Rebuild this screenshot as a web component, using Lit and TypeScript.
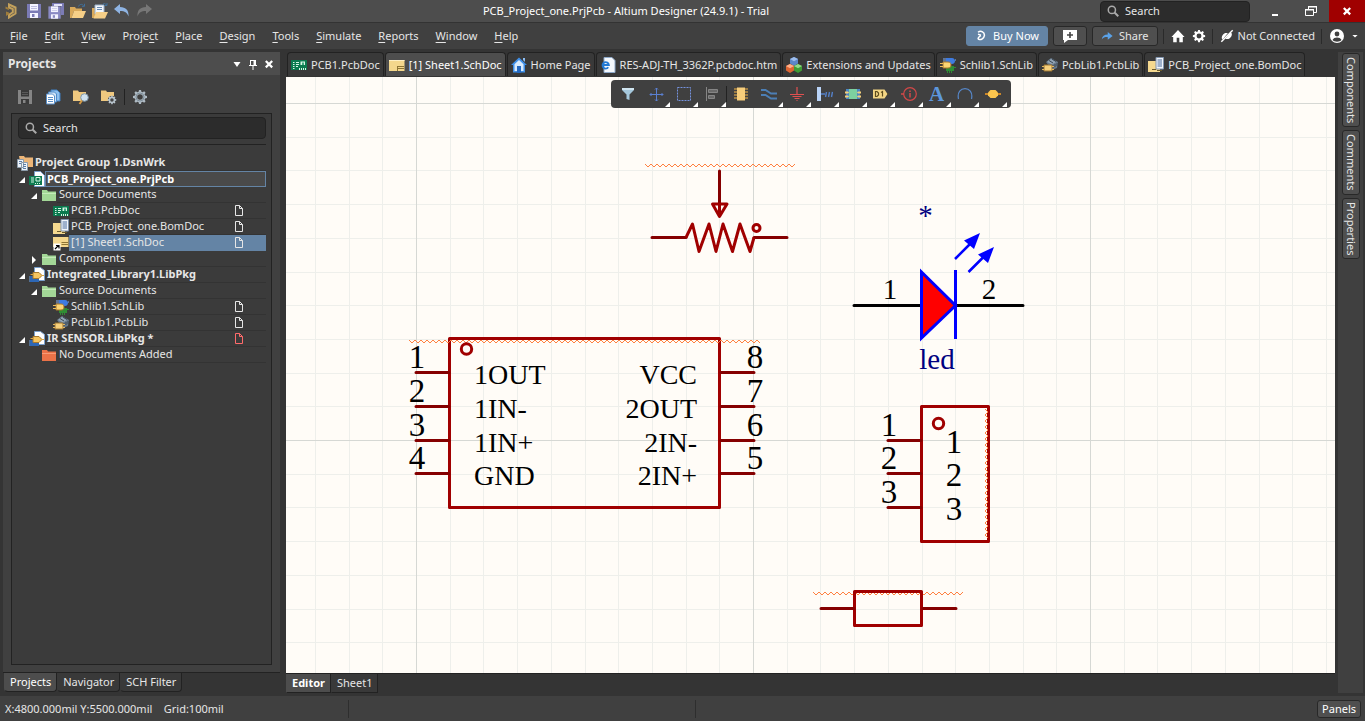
import { LitElement, html, css, svg, TemplateResult } from "lit";
import { customElement, property, state } from "lit/decorators.js";
import { classMap } from "lit/directives/class-map.js";

const gearPath =
  "M7 1h2l.4 1.8 1.2.5 1.6-1 1.4 1.4-1 1.6.5 1.2L15 7v2l-1.9.5-.5 1.2 1 1.6-1.4 1.4-1.6-1-1.2.5L9 15H7l-.4-1.8-1.2-.5-1.6 1-1.4-1.4 1-1.6-.5-1.2L1 9V7l1.9-.5.5-1.2-1-1.6 1.4-1.4 1.6 1 1.2-.5zM8 5.2a2.8 2.8 0 1 0 0 5.6 2.8 2.8 0 0 0 0-5.6z";

const floppy = (edge: string, paper: string) => svg`
  <path d="M1 1h14v14H1z" fill=${edge}/><path d="M4 1h8v6.500H4z" fill=${paper}/>
  <path d="M5 3h6v1H5zM5 5h6v1H5z" fill=${edge} opacity=".45"/>
  <path d="M4 10h8v5H4z" fill=${paper}/><path d="M6 11h2.500v3H6z" fill=${edge}/>`;

const icons: Record<string, TemplateResult<2>> = {
  logo: svg`<path d="M5 1.500 11.500 4.500v6L5 14.500v-2.800l3.800-2.400V6.200L5 4.500z" fill="none" stroke="#c3a15c" stroke-width="2"/><path d="M1.500 3.500 5 5v2L1.500 5.800zM2 8.500l3 1v1.800L2 13z" fill="#9f7d3c"/>`,
  altium: svg`<path d="M4 3c4-3 9 0 8.500 4.500C12 11 8 13.500 5 12.500c-2-1 0-3.500 3-5M4 5.500l4 1.500" fill="none" stroke="#fff" stroke-width="2"/>`,
  save: floppy("#7b7bb5", "#f4f4ff"),
  saveGray: floppy("#858585", "#3a3a3a"),
  saveAll: svg`<path d="M4 0h12v12h-3V3H4z" fill="#7b7bb5"/><path d="M6 1h8v2H6z" fill="#e4e4fa"/><g transform="translate(-.5 2.500) scale(.88)">${floppy("#8a8ac4", "#f4f4ff")}</g>`,
  open: svg`<path d="M0 4h5l1 1.500h6V8H4L1.500 15H0z" fill="#d9a95a"/><path d="M4 8h12l-3 7H1.500z" fill="#f6cf87"/><path d="M8.500 3.500C9.500 1 12 .8 13.500 2.500M14.500.8v2.500H12" fill="none" stroke="#41719c"/>`,
  openDoc: svg`<path d="M0 5h3v10H0z" fill="#d9a95a"/><path d="M3 2h9v9H3z" fill="#f2f6fb" stroke="#9db3cc"/><path d="M5 4.500h5M5 6.500h5" stroke="#6c8db5"/><path d="M4 9h12l-3 6.500H1.500z" fill="#f6cf87"/><path d="M10.500 1.500c1.500-1.500 3-1 4 .5M15 0v2.500h-2.500" fill="none" stroke="#41719c"/>`,
  undo: svg`<path d="M0 6 6 1v3C12 4 15 7.500 14.500 13.500 13 9.500 11 8 6 8v3z" fill="#8fb4e3"/>`,
  redo: svg`<path d="M16 6 10 1v3C4 4 1 7.500 1.500 13.500 3 9.500 5 8 10 8v3z" fill="#777"/>`,
  search: svg`<circle cx="6.500" cy="6.500" r="4.800" fill="none" stroke="#aaa" stroke-width="2"/><path d="m10 10 5 5" stroke="#aaa" stroke-width="2.600"/>`,
  min: svg`<path d="M5 11h6v2H5z" fill="#fff"/>`,
  restore: svg`<path d="M5.500 6V3.500h8v6H11M2.500 6.500h8v6h-8z" fill="none" stroke="#fff"/><path d="M5 3h9v1.500H5zM2 6h9v1.500H2z" fill="#fff"/>`,
  close: svg`<path d="m4.800 5 6.400 6.400m0-6.400-6.400 6.400" stroke="#fff" stroke-width="2.200"/>`,
  plusBubble: svg`<path d="M1 2h14v10H6l-4 3V12H1z" fill="#fff"/><path d="M8 4v6M5 7h6" stroke="#444" stroke-width="1.600"/>`,
  share: svg`<path d="M1 12.500C1.500 8 4.500 6 9 6V2.500L15.500 8 9 13v-3.500C5.500 9.300 3 10 1 12.500z" fill="#5aa2e8"/>`,
  home: svg`<path d="M8 1 15.500 9h-2V15H9.500V10h-3v5H2.500V9H.5z" fill="#fff"/>`,
  gearWhite: svg`<path d=${gearPath} fill="#fff" fill-rule="evenodd"/>`,
  gear: svg`<path d=${gearPath} fill="#aebac3" fill-rule="evenodd"/><circle cx="8" cy="8" r="4" fill="none" stroke="#7d8d99"/>`,
  plug: svg`<path d="M2 10.500c0-3 2-6 5-6h2L3 12zM13.500 5c.5 3-2 6.500-5.500 6.500H6L12 4z" fill="#fff"/><path d="M1.500 14.500 14.500 1.500" stroke="#fff" stroke-width="1.600"/>`,
  user: svg`<circle cx="8" cy="8" r="7" fill="#fff"/><circle cx="8" cy="6" r="2.400" fill="#404040"/><path d="M3.500 12c1.500-3.300 7.500-3.300 9 0-2 2.300-7 2.300-9 0z" fill="#404040"/>`,
  caret: svg`<path d="M4.500 6.500h7L8 10z" fill="#fff"/>`,
  caretBig: svg`<path d="M4.500 6h7L8 11z" fill="#fff"/>`,
  pin: svg`<path d="M5.500 4v5M4 9.500h8M8 10v4M5.500 4.500H10" stroke="#fff" fill="none"/><path d="M8.500 4H11v5.500H8.500z" fill="#fff"/>`,
  copyDocs: svg`<path d="M6 1h6l3 3v8H6z" fill="#8fc0ee" stroke="#3f7fc2"/><path d="M3.500 3h6l2 2v8h-8z" fill="#cfe3f7" stroke="#4d8ac9"/><path d="M1.500 5h6l2 2v8h-8z" fill="#fff" stroke="#5a8fc8"/><path d="M3 8.500h5M3 10.500h5M3 12.500h5" stroke="#5a8fc8"/>`,
  folderFind: svg`<path d="M0 1.500h5L6 3h7v9H0z" fill="#efc87f"/><circle cx="11.500" cy="8.500" r="3.800" fill="#cfe2f0" stroke="#7e98ab"/><path d="M9 11.500 6.500 15" stroke="#d49a45" stroke-width="2"/>`,
  folderGear: svg`<path d="M0 1.500h5L6 3h7v9H0z" fill="#efc87f"/><g transform="translate(6 6) scale(.62)"><circle cx="8" cy="8" r="6.500" fill="#444"/><path d=${gearPath} fill="#b7c3cc" fill-rule="evenodd"/></g>`,
  group: svg`<path d="M2 1h5l1 1.500h8V12H4z" fill="#edb678"/><path d="M.500 4.500h6v8h-6zM4.500 7.500h6v8h-6z" fill="#eef3fa" stroke="#8d9cab"/><path d="M2 6.500h3M2 8.500h2M6 9.500h3M6 11.500h3M6 13.500h3" stroke="#5b7ea8"/>`,
  pcbProject: svg`<path d="M5.500.5h6l4 4v11h-10z" fill="#fff" stroke="#7aa0cc"/><path d="M0 5h13v9H0z" fill="#0d7a50"/><path d="M2 7h3M2 9h3M2 11h3M6 12.500h1m1 0h1m1 0h1" stroke="#d5f5e3"/><path d="M7 6.500h4V10H7z" fill="none" stroke="#d5f5e3"/>`,
  pcb: svg`<path d="M0 3h16v10H0z" fill="#0b7a4f"/><path d="M2 5h1.500v1H2zm0 2h1.500v1H2zm0 2h1.500v1H2zm0 2h1.500v1H2zM5 5h3v1H5zm0 2h3v1H5zm0 2h2v1H5zM9.500 4.500H14V8H9.500zM8 11h1v2H8zm2 0h1v2h-1zm2 0h1v2h-1zm2 0h1v2h-1z" fill="#d6f5e5"/><path d="M11 5.500h2V8h-2z" fill="#3aa97c"/>`,
  bom: svg`<path d="M0 4h12v11H0z" fill="#f5d98f"/><path d="M8 .5h7.500V12H8z" fill="#f1f5fb" stroke="#8093ad"/><path d="M9.500 3H14M9.500 5H14M9.500 7H14M9.500 9H14" stroke="#4a6c9e"/><path d="M4 12.500h4M9 13.500h5" stroke="#6b5a2a"/>`,
  sheet: svg`<path d="M0 3h15.500v11H0z" fill="#f4d78c"/><path d="M0 3h15.500v1H0z" fill="#fff0c4"/><path d="M8.500 9.500H15M8.500 11.500H15M8.500 9v5" stroke="#8d7434"/>`,
  sheetLink: svg`<path d="M0 2h15.500v10H0z" fill="#f4d78c"/><path d="M8.500 7.500H15M8.500 9.500H15" stroke="#8d7434"/><path d="M.500 8.500h7v7h-7z" fill="#fff"/><path d="M2 14l3.500-3.500M3 10.500h3v3" stroke="#000" fill="none" stroke-width="1.200"/>`,
  folderGreen: svg`<path d="M1 3h5l1 1.500h8V14H1z" fill="#a3d797"/><path d="M1 6h14v1H1z" fill="#c4eab9"/>`,
  folderRed: svg`<path d="M1 3h5l1 1.500h8V14H1z" fill="#ea7248"/><path d="M1 6h14v1H1z" fill="#f79a75"/>`,
  libPkg: svg`<path d="M5.500.5h6l4 3v10h-10z" fill="#fff" stroke="#7aa0cc"/><path d="M1 9h9v6H1z" fill="#2d67b5"/><path d="M0 10h1m-1 2h1m-1 2h1" stroke="#6fa4e6"/><path d="M4 5.500h6l3 3-3 3H4z" fill="#f6c55f" stroke="#a8782a"/><path d="M1.500 7.500H4M13 8.500h2" stroke="#d9a441"/>`,
  schLib: svg`<path d="M6 1h6c2 0 3 1.500 3 3s-1 3-3 3H6z" fill="#3e7be0"/><path d="M3 2h3m-3 2h3m9-1h1" stroke="#86aef0"/><path d="M6 9h8v5H6z" fill="#2f8d34"/><path d="M7.500 14v2m2-2v2m2-2v2M14 10.500h2" stroke="#2f8d34"/><path d="M3 5h5c2 0 3 1 3 3s-1 3-3 3H3z" fill="#fbd574" stroke="#a8782a"/><path d="M0 6.500h3M0 9.500h3" stroke="#f0bd58"/>`,
  pcbLib: svg`<path d="m4 5 5-4 7 4-1 6-5 2z" fill="#68798a"/><path d="m5 5 4-3 5 3-4 2.500z" fill="#93a5b5"/><path d="M7 3.500 11 6m-1-4 4 2.500M11 8v3m2-4v3m2-4v3" stroke="#3a4854"/><path d="M2 8h8v6H2z" fill="#f6d07c" stroke="#9c7430"/><path d="M0 9.500h2m-2 3h2m8-3h2m-2 3h2" stroke="#e3b75e"/>`,
  house: svg`<path d="M8 .5 0 8h2v7.500h12V8h2z" fill="#3f8fe8"/><path d="M8 3 3.500 7.200V14h9V7.200z" fill="#d9ebfd"/><path d="M6 9h4v7H6z" fill="#2468c0"/><path d="M12 1h2v4l-2-2z" fill="#8dbdf2"/>`,
  htm: svg`<path d="M4 .5h8l3 3v12H4z" fill="#f4f8fd" stroke="#8ea9c9"/><path d="M8.300 10.300A3.200 3.200 0 1 1 8.900 8H3" fill="none" stroke="#2179d5" stroke-width="1.800"/>`,
  cubes: svg`<path d="m8 0 4 2v4.500L8 9 4 6.500V2z" fill="#5d86c9"/><path d="m8 0 4 2-4 2.200L4 2z" fill="#9dbdec"/><path d="m4 7 4 2v4.500L4 16l-4-2.500V9z" fill="#dd6532"/><path d="m4 7 4 2-4 2.200L0 9z" fill="#ffb08a"/><path d="m12 7 4 2v4.500L12 16l-4-2.500V9z" fill="#3f9c35"/><path d="m12 7 4 2-4 2.200L8 9z" fill="#95d98a"/>`,
  file: svg`<path d="M4.500 3.500h4l3 3v7h-7zM8.500 3.500v3h3" fill="none" stroke="currentColor"/>`,
  filter: svg`<path d="M2 2h12v2L9.500 8.500V14l-3-1V8.500L2 4z" fill="#a5c8dd"/><path d="M2 2h12v2H2z" fill="#d0e5f0"/>`,
  cross: svg`<path d="M8.500 2v13M2 8.500h13M7 3.500 8.500 2 10 3.500M7 13.500 8.500 15 10 13.500M3.500 7 2 8.500 3.500 10M13.500 7 15 8.500 13.500 10" fill="none" stroke="#5a7fd0"/>`,
  select: svg`<path d="M1.500 1.500h13v13h-13z" fill="none" stroke="#7592de" stroke-dasharray="2 1"/>`,
  align: svg`<path d="M2.500 1v14" stroke="#858585"/><path d="M4.500 3.500h9v3h-9zM4.500 9.500h6v3h-6z" fill="#6a6a6a" stroke="#858585"/>`,
  part: svg`<path d="M4 1.500h8v13H4z" fill="#f6cd7b"/><path d="M1 3h3M1 6h3M1 9h3M1 12h3m8-9h3m-3 3h3m-3 3h3m-3 3h3" stroke="#b98f44" stroke-width="1.500"/>`,
  wire: svg`<path d="M0 4h4.500L10 7.500h6M0 9h4.500L10 12.500h6" fill="none" stroke="#4c7fb5" stroke-width="1.800"/>`,
  ground: svg`<path d="M8 1v7M1 8.500h14M3.500 10.500h9M5.500 12.500h5M7.500 14.500h1" stroke="#e05050" stroke-width="1.200"/>`,
  harness: svg`<path d="M0 1h4v14H0z" fill="#b9d3f7"/><path d="M4 8h4M8.500 11l1-5M11.500 11l1-5M14.500 11l1-5" stroke="#5480c9" stroke-width="1.400"/>`,
  sheetSymbol: svg`<path d="M1 3h14v10H1z" fill="#4c86c5"/><path d="M4 3h8v10H4z" fill="#7dd0a0"/><path d="M0 5.500h3l1 1-1 1H0zm0 4h3l1 1-1 1H0zM16 5.500h-3l-1 1 1 1h3zm0 4h-3l-1 1 1 1h3z" fill="#f4cf7b"/>`,
  port: svg`<path d="M0 3.500h11.500L14.500 8l-3 4.500H0z" fill="#f3d584"/><path d="M2.500 5.500v5H4L5.500 9V7L4 5.500zM8 6.500l1.500-1v5M14 8h2" fill="none" stroke="#5d4c1d" stroke-width="1.200"/>`,
  info: svg`<circle cx="9" cy="8" r="6.300" fill="none" stroke="#d24848" stroke-width="1.200"/><path d="M0 8h3M9 4.500V6M9 7v4.500" stroke="#d24848" stroke-width="1.500"/>`,
  arc: svg`<path d="M1.500 13C-1.500-.8 17.500-.8 14.500 13" fill="none" stroke="#5687c9" stroke-width="1.200"/>`,
  junction: svg`<path d="M0 8h16" stroke="#c9862b" stroke-width="2"/><path d="M5.500 4h5L13 6.500v3L10.500 12h-5L3 9.500v-3z" fill="#fbc54e"/>`,
};

const icon = (name: string, size = 16) =>
  html`<svg width=${size} height=${size} viewBox="0 0 16 16" aria-hidden="true">${icons[name]}</svg>`;

const shared = css`
  * { box-sizing: border-box; }
  svg { display: block; flex: none; }
  button, input { font: inherit; color: inherit; background: none; border: 0; margin: 0; padding: 0; white-space: nowrap; }
  .search { display: flex; align-items: center; gap: 6px; background: #2c2c2c; border: 1px solid #222; border-radius: 4px; }
  .search input { flex: 1; min-width: 0; outline: 0; }
  .search input::placeholder { color: #e6e6e6; opacity: 1; }
`;

interface Node {
  text: string;
  icon: string;
  level: number;
  arrow?: "open" | "closed";
  mark?: "plain" | "red";
  bold?: boolean;
}

const nodes: Node[] = [
  { text: "Project Group 1.DsnWrk", icon: "group", level: 0, bold: true },
  { text: "PCB_Project_one.PrjPcb", icon: "pcbProject", level: 1, arrow: "open", bold: true },
  { text: "Source Documents", icon: "folderGreen", level: 2, arrow: "open" },
  { text: "PCB1.PcbDoc", icon: "pcb", level: 3, mark: "plain" },
  { text: "PCB_Project_one.BomDoc", icon: "bom", level: 3, mark: "plain" },
  { text: "[1] Sheet1.SchDoc", icon: "sheetLink", level: 3, mark: "plain" },
  { text: "Components", icon: "folderGreen", level: 2, arrow: "closed" },
  { text: "Integrated_Library1.LibPkg", icon: "libPkg", level: 1, arrow: "open", bold: true },
  { text: "Source Documents", icon: "folderGreen", level: 2, arrow: "open" },
  { text: "Schlib1.SchLib", icon: "schLib", level: 3, mark: "plain" },
  { text: "PcbLib1.PcbLib", icon: "pcbLib", level: 3, mark: "plain" },
  { text: "IR SENSOR.LibPkg *", icon: "libPkg", level: 1, arrow: "open", mark: "red", bold: true },
  { text: "No Documents Added", icon: "folderRed", level: 2 },
];

@customElement("projects-panel")
export class ProjectsPanel extends LitElement {
  @state() private selected = 5;
  private focused = 1;

  static styles = [
    shared,
    css`
      :host { display: flex; flex-direction: column; background: #404040; border-bottom: 1px solid #222; }
      .head { display: flex; align-items: center; height: 23px; padding: 0 3px 0 5px; background: #4d4d4d; font-weight: 700; }
      .head h2 { flex: 1; margin: 0; font-size: 12px; }
      .tools { display: flex; align-items: center; gap: 12px; height: 38px; padding: 6px 14px 0; }
      .tools .sep { width: 1px; height: 16px; margin: 0 -5px; background: #222; }
      .box { flex: 1; margin: 0 8px 7px; padding: 3px 5px; border: 1px solid #222; background: #3b3b3b; }
      .search { height: 22px; margin-left: 1px; padding-left: 6px; }
      .rule { height: 1px; margin: 5px 0 10px 1px; background: #222; }
      ul { margin: 0; padding: 0; list-style: none; }
      li { display: flex; align-items: center; height: 16px; line-height: 14px; }
      .l2 { padding-left: 12px; }
      .l3 { padding-left: 24px; }
      .arrow { width: 12px; flex: none; padding: 3px 0 0 2px; }
      .label { flex: 1; align-self: stretch; display: flex; align-items: center; min-width: 0; padding: 0 19px 1px 2px; border-bottom: 1px solid #333; text-align: left; cursor: pointer; }
      .label span { flex: 1; }
      .bold { font-weight: 700; }
      .focused { border: 1px solid #6484a5; background: #4a4a4a; padding-left: 1px; color: #fff; }
      .selected { background: #6484a5; border-color: #6484a5; }
      .red { color: #ff6b6b; }
    `,
  ];

  render() {
    return html`
      <div class="head">
        <h2>Projects</h2>
        <button aria-label="Panel menu">${icon("caretBig")}</button>
        <button aria-label="Pin panel">${icon("pin")}</button>
        <button aria-label="Close panel">${icon("close")}</button>
      </div>
      <div class="tools">
        <button aria-label="Save">${icon("saveGray")}</button>
        <button aria-label="Compile">${icon("copyDocs")}</button>
        <button aria-label="Explore">${icon("folderFind")}</button>
        <button aria-label="Project options">${icon("folderGear")}</button>
        <div class="sep"></div>
        <button aria-label="Settings">${icon("gear")}</button>
      </div>
      <div class="box">
        <label class="search">${icon("search", 12)}<input type="text" placeholder="Search" aria-label="Search projects" /></label>
        <div class="rule"></div>
        <ul>
          ${nodes.map(
            (n, i) => html`<li class="l${n.level}">
              ${n.level > 0
                ? html`<svg class="arrow" width="12" height="12" viewBox="0 0 10 9">
                    ${n.arrow === "open" ? svg`<path d="M6 1v6H0z" fill="#fff"/>` : n.arrow ? svg`<path d="M1 0l4 4-4 4z" fill="#fff"/>` : ""}
                  </svg>`
                : ""}
              ${icon(n.icon)}
              <button
                class=${classMap({ label: true, bold: !!n.bold, focused: i === this.focused, selected: i === this.selected })}
                @click=${() => (this.selected = i)}
              >
                <span>${n.text}</span>${n.mark ? html`<i class=${n.mark}>${icon("file")}</i>` : ""}
              </button>
            </li>`
          )}
        </ul>
      </div>
    `;
  }
}

const steps = (from: number, to: number) => Array.from({ length: to - from + 1 }, (_, i) => from + i);
const PITCH = 33.7;

/* Orange error underline: a zigzag with a 6px period. */
const wave = (x: number, y: number, length: number, upright = false) => {
  const pts = steps(0, Math.floor(length / 3)).map((i) => {
    const a = i * 3;
    const b = i % 2 ? 2 : -1;
    return upright ? `${x + b},${y + a}` : `${x + a},${y + b}`;
  });
  return svg`<polyline class="wave" points=${pts.join(" ")}/>`;
};

@customElement("schematic-canvas")
export class SchematicCanvas extends LitElement {
  static styles = css`
    :host { display: block; overflow: hidden; background: #fffcf7; }
    svg { display: block; width: 100%; height: 100%; }
    .minor { stroke: #eeefeb; }
    .major { stroke: #d6d8d4; }
    .wave { fill: none; stroke: #ff8040; stroke-width: 1; }
    .body { fill: none; stroke: #a00000; stroke-width: 3; stroke-linejoin: round; }
    .pin { fill: none; stroke: #850000; stroke-width: 3; stroke-linecap: round; }
    .lead { stroke: #000; stroke-width: 3; stroke-linecap: round; }
    .diode { fill: red; stroke: #00f; stroke-width: 3; }
    .ray { stroke: #00f; stroke-width: 2.5; }
    .tip { fill: #00f; }
    text { font-family: "Liberation Serif", serif; }
    .num { font-size: 33px; text-anchor: middle; }
    .name { font-size: 28px; }
    .end { text-anchor: end; }
    .small { font-size: 29px; text-anchor: middle; }
    .navy { fill: #000080; }
  `;

  render() {
    return html`<svg role="img" aria-label="Schematic sheet">
      <g transform="translate(-286 -77)">
        <g shape-rendering="crispEdges">
          ${[false, true].map((major) =>
            steps(-12, 60).filter((i) => (i % 10 === 0) === major).map((i) => {
              const p = Math.round(i * PITCH);
              const c = major ? "major" : "minor";
              return svg`<path class=${c} d="M${416.5 + p} 0V3000M0 ${440.5 + p}H4000"/>`;
            })
          )}
        </g>

        ${wave(645, 165, 150)}
        <path class="pin" d="M719.5 171v32M652 237.500h34M754 237.500h33"/>
        <path class="body" d="M712.500 204h14.500L719.500 216.500zM719.500 204v10"/>
        <path class="body" d="M686 237.500 692.500 224 699 251.500 709 224 716 251.500 723 224 732.500 251.500 740 224 750 251.500 754 237.500"/>
        <circle class="body" cx="756.5" cy="228" r="3.5"/>

        <rect class="body" x="449.5" y="338.500" width="270" height="169"/>
        ${wave(409, 341, 351)}
        <circle class="body" cx="466.5" cy="349" r="5.2"/>
        ${[
          [372.5, "1", "1OUT", "VCC", "8"],
          [406.5, "2", "1IN-", "2OUT", "7"],
          [440.5, "3", "1IN+", "2IN-", "6"],
          [473.5, "4", "GND", "2IN+", "5"],
        ].map(([pinY, l, ln, rn, r]) => {
          const y = Number(pinY);
          return svg`<path class="pin" d="M416 ${y}h33M721 ${y}h33"/>
            <text class="num" x="417" y=${y - 5}>${l}</text>
            <text class="num" x="755" y=${y - 5}>${r}</text>
            <text class="name" x="474" y=${y + 11}>${ln}</text>
            <text class="name end" x="697" y=${y + 11}>${rn}</text>`;
        })}

        <text class="small navy" x="925.5" y="225">*</text>
        <path class="lead" d="M854 305.500h67M956 305.500h67"/>
        <path class="diode" d="M921.5 272v66L955.500 305.500zM955.500 270v69"/>
        <path class="ray" d="M955 259l15-15M968.500 272l15-15"/>
        <path class="tip" d="M980 233l-16 7.500 10 8.500zM994 247l-16 7.500 10 8.500z"/>
        <text class="small" x="890" y="299">1</text>
        <text class="small" x="989" y="299">2</text>
        <text class="small navy" x="937" y="369">led</text>

        <rect class="body" x="921.5" y="406.500" width="67" height="135"/>
        ${wave(986, 409, 131, true)}
        <circle class="body" cx="938.5" cy="423.500" r="5.2"/>
        ${[440.5, 473.5, 507.5].map(
          (y, i) => svg`<path class="pin" d="M888 ${y}h33"/>
            <text class="num" x="889" y=${y - 5}>${i + 1}</text>
            <text class="num" x="954" y=${y + 12}>${i + 1}</text>`
        )}

        ${wave(813, 593, 150)}
        <rect class="body" x="854.5" y="591.500" width="67" height="34"/>
        <path class="pin" d="M821 608.500h33M923 608.500h33"/>
      </g>
    </svg>`;
  }
}

@customElement("tool-strip")
export class ToolStrip extends LitElement {
  @property({ attribute: false }) tools: string[] = [];
  static styles = [
    shared,
    css`
      :host { display: flex; height: 28px; padding: 0 4px 0 3px; background: #404040; border-radius: 4px; }
      button { display: flex; align-items: center; justify-content: center; width: 28px; height: 28px; position: relative; }
      .more::after { content: ""; position: absolute; right: 0; bottom: 1px; border: solid transparent; border-width: 0 0 5px 5px; border-bottom-color: #fff; }
      .sep { width: 1px; margin: 6px 0; background: #222; }
      .letter { font: 700 21px/24px "Liberation Serif", serif; color: #5d97dc; }
    `,
  ];
  render() {
    return this.tools.map((t, i) =>
      t === "|"
        ? html`<div class="sep"></div>`
        : html`<button class=${classMap({ more: i > 0 && t !== "part", letter: t === "A" })} aria-label=${t}>${t === "A" ? t : icon(t)}</button>`
    );
  }
}

@customElement("app-root")
export class AppRoot extends LitElement {
  @state() private tab = 1;

  private menus = ["_File", "_Edit", "_View", "Proje_ct", "_Place", "_Design", "_Tools", "_Simulate", "_Reports", "_Window", "_Help"];
  private docs = [
    ["pcb", "PCB1.PcbDoc"],
    ["sheet", "[1] Sheet1.SchDoc"],
    ["house", "Home Page"],
    ["htm", "RES-ADJ-TH_3362P.pcbdoc.htm"],
    ["cubes", "Extensions and Updates"],
    ["schLib", "Schlib1.SchLib"],
    ["pcbLib", "PcbLib1.PcbLib"],
    ["bom", "PCB_Project_one.BomDoc"],
  ];
  private tools = ["filter", "cross", "select", "align", "|", "part", "wire", "ground", "harness", "sheetSymbol", "port", "info", "A", "arc", "junction"];

  static styles = [
    shared,
    css`
      :host { display: flex; flex-direction: column; height: 100vh; overflow: hidden; background: #343434; color: #e6e6e6; font: 11px/16px "Noto Sans", "Open Sans", sans-serif; }
      .title { display: flex; align-items: center; height: 22px; flex: none; background: #4d4d4d; }
      .quick { display: flex; gap: 6px; padding-left: 4px; }
      .title h1 { flex: 1; margin: 0; text-align: center; font-size: inherit; font-weight: 400; color: #fff; }
      .title .search { width: 150px; height: 21px; margin-right: 7px; padding-left: 6px; }
      .win { display: flex; align-items: center; justify-content: center; width: 36px; height: 22px; }
      .x { background: #a00000; }
      .menu { display: flex; align-items: center; height: 27px; flex: none; padding: 0 4px 0 10px; background: #404040; border-top: 1px solid #333; }
      .menus { display: flex; gap: 17px; flex: 1; }
      .menus u { text-underline-offset: 2px; }
      .menu button { display: flex; align-items: center; }
      .menu .btn { height: 20px; gap: 6px; padding: 0 8px; border: 1px solid #282828; border-radius: 3px; background: #4f4f4f; margin-right: 5px; }
      .menu .buy { background: #6484a5; border-color: #6484a5; color: #fff; }
      .vr { width: 1px; height: 15px; background: #2a2a2a; }
      .menu .ico { padding: 0 0 0 7px; gap: 4px; }
      .menu .last { padding-right: 6px; }
      .work { flex: 1; display: flex; min-height: 0; padding: 3px 2px 3px 3px; }
      .left { width: 277px; flex: none; display: flex; flex-direction: column; }
      projects-panel { flex: 1; min-height: 0; }
      .bottoms { display: flex; height: 20px; flex: none; padding-left: 1px; }
      .bottoms button { height: 19px; padding: 0 5px; border: 1px solid #222; border-top: 0; border-left-color: transparent; border-radius: 0 0 4px 4px; background: #393939; }
      .bottoms .on { background: #4d4d4d; color: #fff; }
      .editor { flex: 1; min-width: 0; display: flex; flex-direction: column; margin-left: 6px; }
      .docs { display: flex; gap: 1px; height: 25px; flex: none; padding-left: 1px; }
      .docs button { display: flex; align-items: center; gap: 4px; height: 24px; padding: 0 3px; border: 1px solid #222; border-bottom: 0; border-radius: 4px 4px 0 0; background: #393939; }
      .docs .on { background: #4d4d4d; color: #fff; }
      .sheet { flex: 1; min-height: 0; position: relative; display: flex; }
      schematic-canvas { flex: 1; }
      tool-strip { position: absolute; top: 3px; left: 50%; transform: translateX(-50%); }
      .views { padding-left: 0; border-top: 1px solid #222; }
      .views button { border-radius: 0; }
      .views .on { font-weight: 700; }
      .rail { display: flex; flex-direction: column; gap: 3px; width: 25px; flex: none; margin-left: 3px; padding: 1px 4px; background: #404040; }
      .rail button { writing-mode: vertical-rl; width: 18px; padding: 3px 0; line-height: 16px; border: 1px solid #282828; border-radius: 3px; background: #4f4f4f; }
      .status { display: flex; align-items: center; height: 25px; flex: none; padding: 0 4px 0 5px; background: #404040; }
      .coords { width: 343px; flex: none; white-space: pre; }
      .zone { width: 348px; height: 18px; border-left: 1px solid #2e2e2e; border-right: 1px solid #2e2e2e; }
      .panels { height: 18px; margin-left: auto; padding: 0 4px; border: 1px solid #282828; border-radius: 3px; background: #4f4f4f; color: #fff; line-height: 14px; }
    `,
  ];

  private menuText(m: string) {
    const i = m.indexOf("_");
    return html`<button><span>${m.slice(0, i)}<u>${m[i + 1]}</u>${m.slice(i + 2)}</span></button>`;
  }

  render() {
    return html`
      <header class="title">
        <div class="quick">
          ${["logo", "save", "saveAll", "open", "openDoc", "undo", "redo"].map((n) => html`<button aria-label=${n}>${icon(n)}</button>`)}
        </div>
        <h1>PCB_Project_one.PrjPcb - Altium Designer (24.9.1) - Trial</h1>
        <label class="search">${icon("search", 12)}<input type="text" placeholder="Search" aria-label="Search commands" /></label>
        <button class="win" aria-label="Minimize">${icon("min")}</button>
        <button class="win" aria-label="Restore">${icon("restore")}</button>
        <button class="win x" aria-label="Close">${icon("close")}</button>
      </header>
      <nav class="menu">
        <div class="menus">${this.menus.map((m) => this.menuText(m))}</div>
        <button class="btn buy">${icon("altium", 12)}Buy Now</button>
        <button class="btn" aria-label="Feedback">${icon("plusBubble")}</button>
        <button class="btn">${icon("share", 12)}Share</button>
        <div class="vr"></div>
        <button class="ico" aria-label="Home">${icon("home", 14)}</button>
        <button class="ico last" aria-label="Preferences">${icon("gearWhite", 14)}</button>
        <div class="vr"></div>
        <button class="ico last">${icon("plug", 14)}Not Connected</button>
        <div class="vr"></div>
        <button class="ico" aria-label="Account">${icon("user")}${icon("caret", 12)}</button>
      </nav>
      <main class="work">
        <div class="left">
          <projects-panel></projects-panel>
          <div class="bottoms"><button class="on">Projects</button><button>Navigator</button><button>SCH Filter</button></div>
        </div>
        <div class="editor">
          <div class="docs">
            ${this.docs.map(
              ([ic, t], i) => html`<button class=${classMap({ on: i === this.tab })} @click=${() => (this.tab = i)}>${icon(ic)}${t}</button>`
            )}
          </div>
          <div class="sheet">
            <schematic-canvas></schematic-canvas>
            <tool-strip .tools=${this.tools}></tool-strip>
          </div>
          <div class="bottoms views"><button class="on">Editor</button><button>Sheet1</button></div>
        </div>
        <div class="rail"><button>Components</button><button>Comments</button><button>Properties</button></div>
      </main>
      <footer class="status">
        <div class="coords">X:4800.000mil Y:5500.000mil    Grid:100mil</div>
        <div class="zone"></div>
        <button class="panels">Panels</button>
      </footer>
    `;
  }
}
